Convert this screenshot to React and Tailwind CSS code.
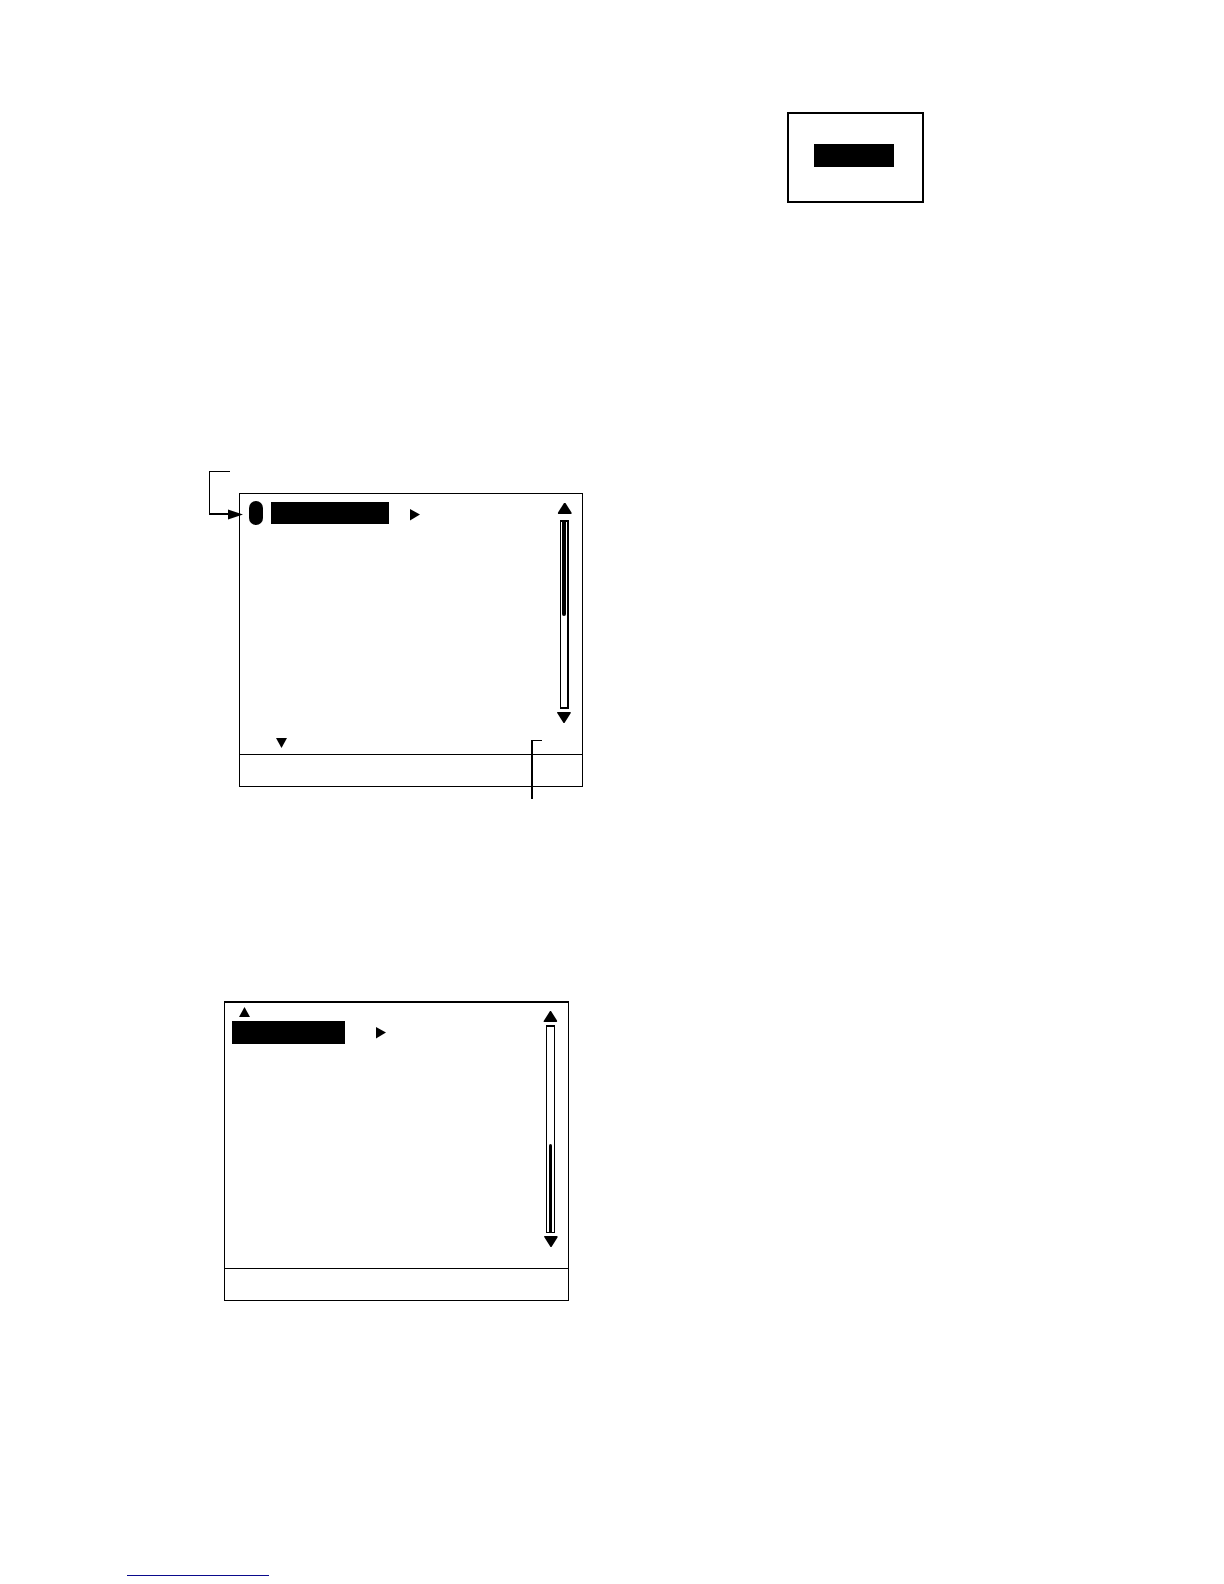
const highlight = 'bg-black';

function RightMarker() {
  return (
    <svg className="h-3 w-2.5 shrink-0" viewBox="0 0 10 12" aria-hidden="true">
      <path d="M0 0 10 5.500 0 11.500Z" />
    </svg>
  );
}

function ScrollButton({ label, d }) {
  return (
    <button type="button" aria-label={label} className="block shrink-0">
      <svg className="block h-[11px] w-[15px]" viewBox="0 0 15 11" aria-hidden="true">
        <path d={d} />
      </svg>
    </button>
  );
}

function Figures() {
  return (
    <>
      <section
        aria-label="Pop-up window"
        className="mt-28 mr-[300px] flex h-[91px] w-full max-w-[137px] self-end border-2 border-black pt-[30px] pl-[25px]"
      >
        <div className={`${highlight} h-[23px] w-20`} />
      </section>

      <section
        aria-label="Menu, first page"
        className="relative mt-[290px] ml-[239px] flex w-full max-w-[344px] flex-col border border-black"
      >
        <div className="flex h-[260px]">
          <div className="flex flex-1 flex-col pt-[7px] pb-1.5 pl-[9px]">
            <div className="flex h-6 items-center">
              <span className="mr-2 h-6 w-3.5 rounded-full bg-black" />
              <span className={`${highlight} mr-[21px] h-[22px] w-[118px]`} />
              <span className="mt-1">
                <RightMarker />
              </span>
            </div>
            <svg className="mt-auto ml-[27px] h-2.5 w-[11px]" viewBox="0 0 11 10" aria-hidden="true">
              <path d="M0 0H11L5.5 10Z" />
            </svg>
          </div>
          <div className="flex flex-col items-center pt-[9px] pr-2.5 pb-[31px]">
            <ScrollButton label="Scroll up" d="M7 0H8.500L14.500 9.500Q15 11 14 11H2Q.5 11 1 9.500Z" />
            <div className="mt-1.5 mb-[3px] flex w-[9px] flex-1 justify-center border-y-2 border-r-2 border-l border-black">
              <div className="h-[94px] w-1 rounded-b-full bg-black" />
            </div>
            <ScrollButton label="Scroll down" d="M.5 0H13Q14.500 0 13.500 1.500L7.500 11H6.500L.5 1.500Q-.5 0 .5 0Z" />
          </div>
        </div>
        <div className="h-8 border-t border-black" />

        <svg
          className="absolute -top-[23px] -left-8 h-[50px] w-9"
          viewBox="208 471 36 50"
          aria-hidden="true"
        >
          <path d="M209 471H230V472H210V513H228V509.500L243 514.500 228 519.500V515H209Z" />
        </svg>
        <svg
          className="absolute top-[246px] left-[291px] h-[59px] w-[11px]"
          viewBox="0 0 11 59"
          aria-hidden="true"
        >
          <path d="M0 0H11V1H2V59H0Z" />
        </svg>
      </section>

      <section
        aria-label="Menu, last page"
        className="mt-[214px] ml-56 flex w-full max-w-[345px] flex-col border border-t-2 border-black"
      >
        <div className="flex h-[265px]">
          <div className="flex flex-1 flex-col pt-1 pl-[7px]">
            <svg className="mb-1 ml-[7px] h-2.5 w-[11px]" viewBox="0 0 11 10" aria-hidden="true">
              <path d="M5.500 0 11 10H0Z" />
            </svg>
            <div className="flex items-center">
              <span className={`${highlight} mr-[31px] h-[23px] w-[113px]`} />
              <RightMarker />
            </div>
          </div>
          <div className="flex flex-col items-center pt-2 pr-2.5 pb-[21px]">
            <ScrollButton label="Scroll up" d="M7 0H8L14 9.500Q14.500 11 13.500 11H1.500Q0 11 1 9.500Z" />
            <div className="my-[3px] flex w-[9px] flex-1 items-end justify-center border border-t-2 border-black">
              <div className="h-[88px] w-[3px] rounded-t-full bg-black" />
            </div>
            <ScrollButton label="Scroll down" d="M1.500 0H14Q15 0 14.500 1.500L8.500 11H7.500L1.500 1.500Q.5 0 1.500 0Z" />
          </div>
        </div>
        <div className="h-8 border-t border-black" />
      </section>
    </>
  );
}

export default function App() {
  return (
    <main className="flex min-h-screen flex-col bg-white">
      <Figures />
      <footer className="mt-auto pb-2 pl-[127px]">
        <a
          href="#contents"
          aria-label="Contents"
          className="block h-4 w-full max-w-[142px] border-b border-[#0a0a8c]"
        />
      </footer>
    </main>
  );
}
